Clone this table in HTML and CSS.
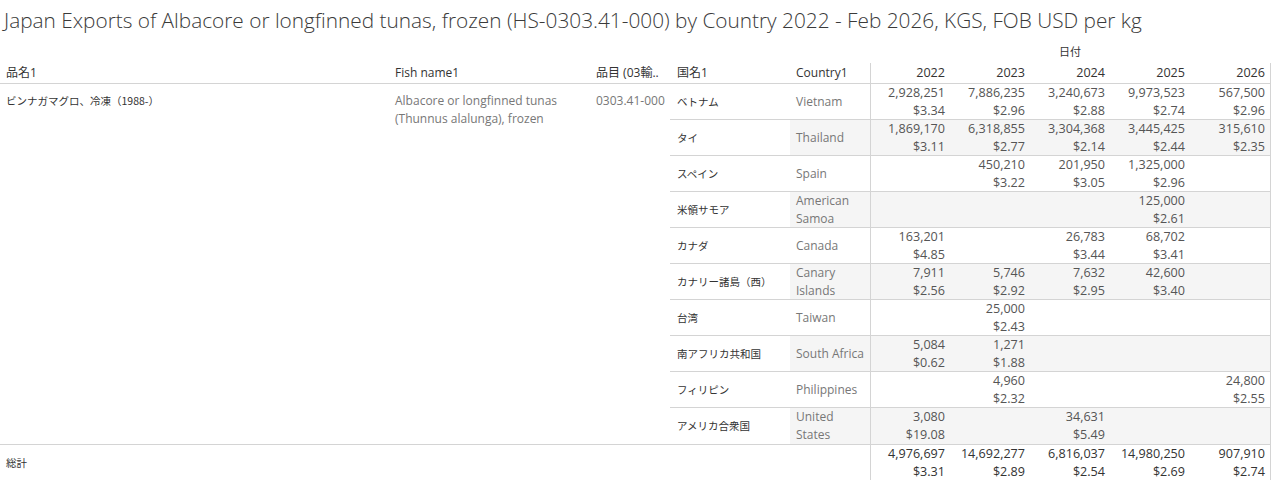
FILE: index.html
```html
<!DOCTYPE html>
<html lang="ja">
<head>
<meta charset="utf-8">
<link rel="stylesheet" href="styles.css">
</head>
<body>
<div class="title">Japan Exports of Albacore or longfinned tunas, frozen (HS-0303.41-000) by Country 2022 - Feb 2026, KGS, FOB USD per kg</div>
<div class="date-row"><span class="date-label">日付</span></div>
<div class="head-row">
  <div class="c-name">品名1</div>
  <div class="c-fish">Fish name1</div>
  <div class="c-code">品目 (03輸..</div>
  <div class="c-jp">国名1</div>
  <div class="c-en">Country1</div>
  <div class="d d1">2022</div>
  <div class="d">2023</div>
  <div class="d">2024</div>
  <div class="d">2025</div>
  <div class="d d5">2026</div>
</div>
<div class="body">
  <div class="left">
    <div class="c-name cjk">ビンナガマグロ、冷凍（1988-）</div>
    <div class="c-fish muted">Albacore or longfinned tunas (Thunnus alalunga), frozen</div>
    <div class="c-code muted">0303.41-000</div>
  </div>
  <div class="rows">
    <div class="row">
      <div class="c-jp">ベトナム</div><div class="c-en">Vietnam</div>
      <div class="d d1">2,928,251<br>$3.34</div><div class="d">7,886,235<br>$2.96</div><div class="d">3,240,673<br>$2.88</div><div class="d">9,973,523<br>$2.74</div><div class="d d5">567,500<br>$2.96</div>
    </div>
    <div class="row alt">
      <div class="c-jp">タイ</div><div class="c-en">Thailand</div>
      <div class="d d1">1,869,170<br>$3.11</div><div class="d">6,318,855<br>$2.77</div><div class="d">3,304,368<br>$2.14</div><div class="d">3,445,425<br>$2.44</div><div class="d d5">315,610<br>$2.35</div>
    </div>
    <div class="row">
      <div class="c-jp">スペイン</div><div class="c-en">Spain</div>
      <div class="d d1"></div><div class="d">450,210<br>$3.22</div><div class="d">201,950<br>$3.05</div><div class="d">1,325,000<br>$2.96</div><div class="d d5"></div>
    </div>
    <div class="row alt">
      <div class="c-jp">米領サモア</div><div class="c-en">American Samoa</div>
      <div class="d d1"></div><div class="d"></div><div class="d"></div><div class="d">125,000<br>$2.61</div><div class="d d5"></div>
    </div>
    <div class="row">
      <div class="c-jp">カナダ</div><div class="c-en">Canada</div>
      <div class="d d1">163,201<br>$4.85</div><div class="d"></div><div class="d">26,783<br>$3.44</div><div class="d">68,702<br>$3.41</div><div class="d d5"></div>
    </div>
    <div class="row alt">
      <div class="c-jp">カナリー諸島（西）</div><div class="c-en">Canary Islands</div>
      <div class="d d1">7,911<br>$2.56</div><div class="d">5,746<br>$2.92</div><div class="d">7,632<br>$2.95</div><div class="d">42,600<br>$3.40</div><div class="d d5"></div>
    </div>
    <div class="row">
      <div class="c-jp">台湾</div><div class="c-en">Taiwan</div>
      <div class="d d1"></div><div class="d">25,000<br>$2.43</div><div class="d"></div><div class="d"></div><div class="d d5"></div>
    </div>
    <div class="row alt">
      <div class="c-jp">南アフリカ共和国</div><div class="c-en">South Africa</div>
      <div class="d d1">5,084<br>$0.62</div><div class="d">1,271<br>$1.88</div><div class="d"></div><div class="d"></div><div class="d d5"></div>
    </div>
    <div class="row">
      <div class="c-jp">フィリピン</div><div class="c-en">Philippines</div>
      <div class="d d1"></div><div class="d">4,960<br>$2.32</div><div class="d"></div><div class="d"></div><div class="d d5">24,800<br>$2.55</div>
    </div>
    <div class="row alt last">
      <div class="c-jp">アメリカ合衆国</div><div class="c-en">United States</div>
      <div class="d d1">3,080<br>$19.08</div><div class="d"></div><div class="d">34,631<br>$5.49</div><div class="d"></div><div class="d d5"></div>
    </div>
  </div>
</div>
<div class="total-row">
  <div class="total-label">総計</div>
  <div class="d d1">4,976,697<br>$3.31</div><div class="d">14,692,277<br>$2.89</div><div class="d">6,816,037<br>$2.54</div><div class="d">14,980,250<br>$2.69</div><div class="d d5">907,910<br>$2.74</div>
</div>
</body>
</html>
```
FILE: styles.css
```css
* { box-sizing: border-box; }
html, body { margin: 0; padding: 0; background: #fff; }
body {
  width: 1272px;
  font-family: "Open Sans", "Noto Sans CJK JP", sans-serif;
  font-size: 12px;
  color: #333;
  overflow: hidden;
}
.title {
  height: 40px;
  line-height: 40px;
  padding-left: 4px;
  font-size: 20.8px;
  font-weight: 300;
  color: #3a3a3a;
  white-space: nowrap;
}
.date-row {
  height: 23px;
  display: flex;
  padding-left: 870px;
}
.date-label {
  width: 400px;
  text-align: center;
  line-height: 23px;
  font-size: 11px;
  font-family: "Noto Sans CJK JP", sans-serif;
}
.head-row {
  display: flex;
  width: 1271px;
  height: 21px;
  border-bottom: 1px solid #d4d4d4;
  line-height: 20px;
}
.c-name { width: 390px; padding-left: 6px; white-space: nowrap; }
.c-fish { width: 201px; padding-left: 5px; }
.c-code { width: 79px; padding-left: 5px; white-space: nowrap; }
.c-jp { width: 120px; padding-left: 7px; white-space: nowrap; }
.c-en { width: 80px; padding-left: 6px; }
.cjk, .row .c-jp, .total-label {
  font-family: "Noto Sans CJK JP", sans-serif;
  font-size: 10.5px;
}
.d {
  width: 80px;
  padding-right: 5px;
  text-align: right;
  white-space: nowrap;
  font-size: 12.6px;
}
.d1 { border-left: 1px solid #d4d4d4; }
.d5 { width: 81px; border-right: 1px solid #d4d4d4; }

.body { display: flex; }
.left { display: flex; width: 670px; padding-top: 8px; line-height: 18px; }
.muted { color: #777; }
.rows { display: flex; flex-direction: column; }
.row {
  display: flex;
  height: 36px;
  border-bottom: 1px solid #d4d4d4;
  line-height: 18px;
}
.row.last { border-bottom: none; }
.row .c-jp, .row .c-en { display: flex; align-items: center; }
.row .c-jp { color: #333; }
.row .c-en { color: #777; }
.row.alt .c-en, .row.alt .d { background: #f5f5f5; }
.row .d { color: #555; display: flex; flex-direction: column; justify-content: center; align-items: flex-end; }

.total-row {
  display: flex;
  width: 1271px;
  height: 37px;
  border-top: 1px solid #d4d4d4;
  border-bottom: 1px solid #d4d4d4;
  line-height: 18px;
}
.total-label {
  width: 870px;
  padding-left: 6px;
  display: flex;
  align-items: center;
}
.total-row .d { color: #333; display: flex; flex-direction: column; justify-content: center; align-items: flex-end; }
```
